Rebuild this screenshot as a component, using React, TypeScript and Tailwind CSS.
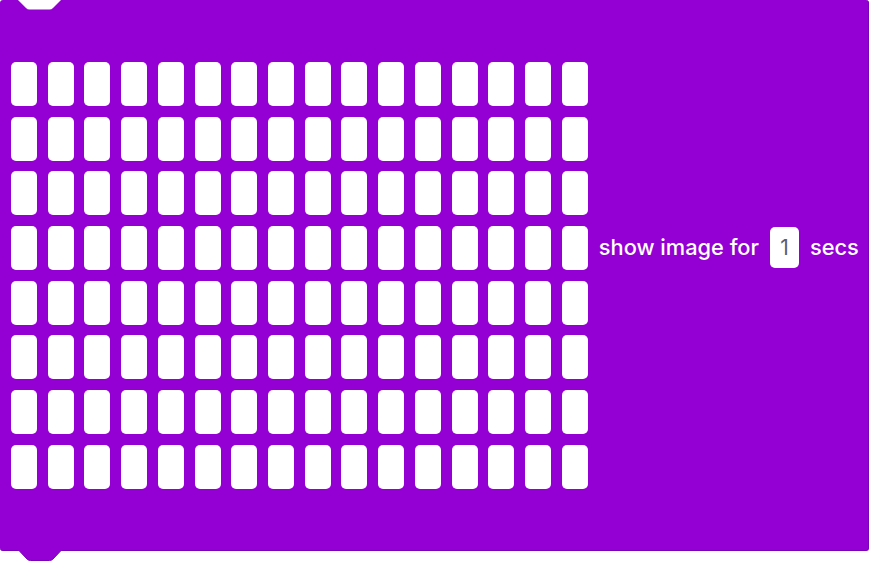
import React from 'react';

const ROWS = 8;
const COLS = 16;

const LedCell = () => (
  <div className="h-[44px] w-[26px] rounded-[5px] bg-white" />
);

const ShowImageBlock = () => {
  const cells = Array.from({ length: ROWS * COLS }, (_, i) => i);

  return (
    <div className="relative h-[551px] w-[869px] rounded-[3px] border-b border-r border-[#7a00b8] bg-[#9400d3]">
      {/* notch at the top */}
      <svg className="absolute left-[18px] top-0" width="43" height="10" viewBox="0 0 43 10">
        <path d="M0 0 L8 8 Q9.5 9.5 11.5 9.5 L31.5 9.5 Q33.5 9.5 35 8 L43 0 Z" fill="#ffffff" />
      </svg>
      {/* tab at the bottom */}
      <svg className="absolute left-[18px] top-[549px]" width="44" height="13" viewBox="0 0 44 13">
        <path d="M0 0.5 L9 10 Q10.5 11.5 12.5 11.5 L31.5 11.5 Q33.5 11.5 35 10 L44 0.5" fill="#9400d3" stroke="#7a00b8" strokeWidth="1" />
        <rect x="0" y="0" width="44" height="1.5" fill="#9400d3" />
      </svg>

      <div className="flex items-start pl-[11px] pt-[62px]">
        <div className="grid shrink-0 grid-cols-[repeat(16,26px)] gap-x-[10.73px] gap-y-[10.7px]">
          {cells.map((c) => (
            <LedCell key={c} />
          ))}
        </div>
        <div className="ml-[11px] mt-[165px] flex shrink-0 items-center gap-[11px] whitespace-nowrap font-['Inter',sans-serif] text-[21.8px] font-medium text-white">
          <span>show image for</span>
          <div className="flex h-[41px] w-[29px] items-center justify-center rounded-[5px] bg-white text-[21px] font-normal text-[#575e75]">
            1
          </div>
          <span>secs</span>
        </div>
      </div>
    </div>
  );
};

const App = () => (
  <div className="h-[562px] w-[869px] overflow-hidden bg-white">
    <ShowImageBlock />
  </div>
);

export default App;
